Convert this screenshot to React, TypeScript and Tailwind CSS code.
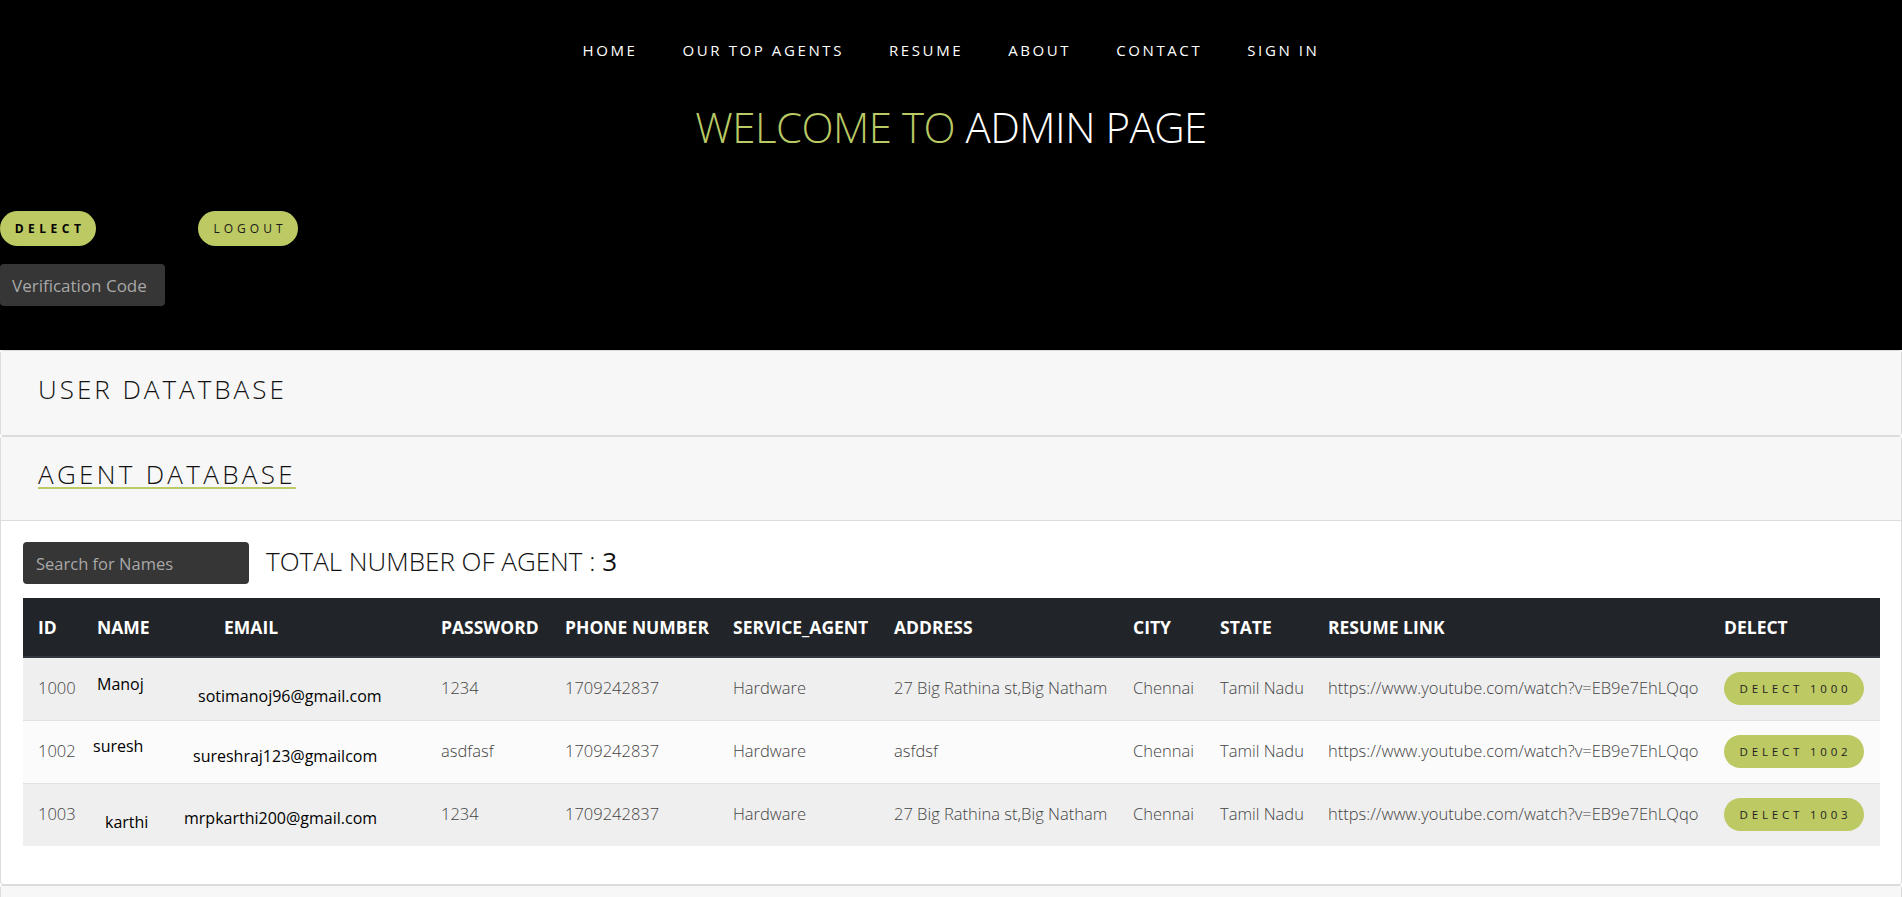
import React from "react";

type Row = {
  id: string;
  name: string;
  nameCls: string;
  email: string;
  emailCls: string;
  password: string;
  phone: string;
  service: string;
  address: string;
  city: string;
  state: string;
  link: string;
  stripe: string;
};

const rows: Row[] = [
  {
    id: "1000",
    name: "Manoj",
    nameCls: "pb-[10px] ml-0",
    email: "sotimanoj96@gmail.com",
    emailCls: "pt-[14px] -ml-[26px]",
    password: "1234",
    phone: "1709242837",
    service: "Hardware",
    address: "27 Big Rathina st,Big Natham",
    city: "Chennai",
    state: "Tamil Nadu",
    link: "https://www.youtube.com/watch?v=EB9e7EhLQqo",
    stripe: "bg-[#efefef]",
  },
  {
    id: "1002",
    name: "suresh",
    nameCls: "pb-[12px] -ml-[4px]",
    email: "sureshraj123@gmailcom",
    emailCls: "pt-[8px] -ml-[31px]",
    password: "asdfasf",
    phone: "1709242837",
    service: "Hardware",
    address: "asfdsf",
    city: "Chennai",
    state: "Tamil Nadu",
    link: "https://www.youtube.com/watch?v=EB9e7EhLQqo",
    stripe: "bg-[#fbfbfb]",
  },
  {
    id: "1003",
    name: "karthi",
    nameCls: "pt-[14px] ml-[8px]",
    email: "mrpkarthi200@gmail.com",
    emailCls: "pt-[6px] -ml-[40px]",
    password: "1234",
    phone: "1709242837",
    service: "Hardware",
    address: "27 Big Rathina st,Big Natham",
    city: "Chennai",
    state: "Tamil Nadu",
    link: "https://www.youtube.com/watch?v=EB9e7EhLQqo",
    stripe: "bg-[#efefef]",
  },
];

const headers = [
  "ID",
  "NAME",
  "EMAIL",
  "PASSWORD",
  "PHONE NUMBER",
  "SERVICE_AGENT",
  "ADDRESS",
  "CITY",
  "STATE",
  "RESUME LINK",
  "DELECT",
];

const widths = [59, 127, 217, 124, 168, 161, 239, 87, 108, 396, 171];

const navItems = ["HOME", "OUR TOP AGENTS", "RESUME", "ABOUT", "CONTACT", "SIGN IN"];

const cell = "h-[63px] px-[15px] text-[16.5px] font-light text-[#444]";

export default function App() {
  return (
    <div className="min-h-screen bg-white font-['Open_Sans',sans-serif] text-[#222]">
      <header className="bg-black h-[350px] flex flex-col">
        <nav className="flex justify-center gap-[45px] pt-[41px]">
          {navItems.map((n) => (
            <a
              key={n}
              className="text-white text-[15px] leading-[18px] tracking-[2.6px] font-normal"
            >
              {n}
            </a>
          ))}
        </nav>
        <h1 className="text-center mt-[40px] text-[42px] leading-[56px] font-light tracking-[-0.5px]">
          <span className="text-[#b9c964]">WELCOME TO </span>
          <span className="text-white">ADMIN PAGE</span>
        </h1>
        <div className="flex items-center gap-[102px] mt-[56px]">
          <button className="w-[96px] h-[35px] rounded-full bg-[#bdc962] text-black text-[12px] font-bold tracking-[4.5px] pl-[4px]">
            DELECT
          </button>
          <button className="w-[100px] h-[35px] rounded-full bg-[#bdc962] text-[#1a1a1a] text-[12px] font-normal tracking-[4px] pl-[4px]">
            LOGOUT
          </button>
        </div>
        <div className="mt-[18px]">
          <input
            placeholder="Verification Code"
            className="w-[165px] h-[42px] rounded-[4px] bg-[#363636] px-[12px] text-[17px] text-[#ccc] placeholder:text-[#a8a8a8] outline-none"
          />
        </div>
      </header>

      <section>
        <div className="border border-[#dcdcdc] rounded-[3px]">
          <div className="h-[84px] bg-[#f7f7f7] flex items-center px-[37px] pb-[7px]">
            <h2 className="text-[26px] font-light tracking-[3px] text-[#111]">USER DATATBASE</h2>
          </div>
        </div>

        <div className="border border-[#dcdcdc] rounded-[3px]">
          <div className="h-[84px] bg-[#f7f7f7] border-b border-[#dcdcdc] flex items-center px-[37px] pb-[8px]">
            <h2 className="text-[26px] font-light tracking-[3.3px] text-[#111] underline decoration-[#bdc962] decoration-2 underline-offset-[3px]">
              AGENT DATABASE
            </h2>
          </div>
          <div className="px-[22px] pt-[21px] pb-[38px]">
            <div className="flex items-center gap-[17px]">
              <input
                placeholder="Search for Names"
                className="w-[226px] h-[42px] rounded-[4px] bg-[#363636] px-[13px] text-[16.5px] text-[#ccc] placeholder:text-[#a8a8a8] outline-none"
              />
              <div className="text-[26px] font-light text-[#111] leading-[32px] -mt-[4px]">
                TOTAL NUMBER OF AGENT : <span className="font-normal">3</span>
              </div>
            </div>

            <table className="mt-[14px] w-full table-fixed border-collapse">
              <colgroup>
                {widths.map((w, i) => (
                  <col key={i} style={{ width: w }} />
                ))}
              </colgroup>
              <thead>
                <tr className="bg-[#212529]">
                  {headers.map((h) => (
                    <th
                      key={h}
                      className="h-[59px] px-[15px] text-left text-white text-[17.5px] font-bold border-b-2 border-[#32383e] whitespace-nowrap"
                    >
                      {h}
                    </th>
                  ))}
                </tr>
              </thead>
              <tbody>
                {rows.map((r) => (
                  <tr key={r.id} className={`${r.stripe} border-t border-[#dee2e6]`}>
                    <td className={cell}>{r.id}</td>
                    <td className="h-[63px] px-[15px]">
                      <div className={`${r.nameCls} text-[16px] text-black font-normal`}>{r.name}</div>
                    </td>
                    <td className="h-[63px] px-[15px] overflow-visible">
                      <div className={`${r.emailCls} text-[16px] text-black font-normal whitespace-nowrap`}>
                        {r.email}
                      </div>
                    </td>
                    <td className={cell}>{r.password}</td>
                    <td className={cell}>{r.phone}</td>
                    <td className={cell}>{r.service}</td>
                    <td className={`${cell} whitespace-nowrap`}>{r.address}</td>
                    <td className={cell}>{r.city}</td>
                    <td className={`${cell} whitespace-nowrap`}>{r.state}</td>
                    <td className={`${cell} whitespace-nowrap`}>{r.link}</td>
                    <td className="h-[63px] px-[15px]">
                      <button className="w-[140px] h-[33px] rounded-full bg-[#bdc962] text-[11.5px] tracking-[3.8px] text-[#222] pl-[3px]">
                        DELECT {r.id}
                      </button>
                    </td>
                  </tr>
                ))}
              </tbody>
            </table>
          </div>
        </div>

        <div className="border border-[#dcdcdc] rounded-[3px]">
          <div className="h-[84px] bg-[#f7f7f7]" />
        </div>
      </section>
    </div>
  );
}
